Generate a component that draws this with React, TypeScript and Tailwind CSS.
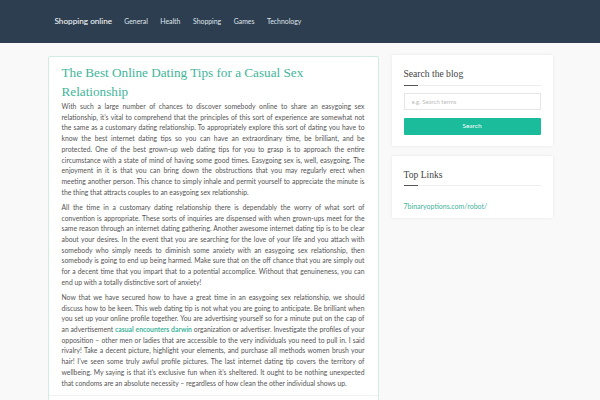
const navLinks = ["General", "Health", "Shopping", "Games", "Technology"];

const Widget = ({
  title,
  children,
  pb = "pb-[11px]",
}: {
  title: string;
  children: React.ReactNode;
  pb?: string;
}) => (
  <div className={`bg-white px-[12px] pt-[12px] ${pb} shadow-[0_0_3px_rgba(0,0,0,0.08)]`}>
    <h3 className="text-[9.6px] leading-[14px] text-[#444] font-['Liberation_Serif',serif]">{title}</h3>
    <div className="mt-[3.5px] flex h-px">
      <div className="w-[14px] bg-[#555]" />
      <div className="flex-1 bg-[#eee]" />
    </div>
    {children}
  </div>
);

export default function App() {
  return (
    <div className="min-h-screen bg-[#f9f9f9] font-['Lato','Liberation_Sans',sans-serif]">
      <nav className="h-[43px] bg-[#2d3e50]">
        <div className="mx-auto flex h-full w-[505px] items-center px-[7px]">
          <span className="text-[8.2px] text-white">Shopping online</span>
          <ul className="ml-[12px] flex gap-[12.5px]">
            {navLinks.map((l) => (
              <li key={l} className="text-[6.9px] text-[#dfe4ea]">
                {l}
              </li>
            ))}
          </ul>
        </div>
      </nav>

      <div className="mx-auto mt-[13px] flex w-[505px] items-start gap-[13px]">
        {/* Main article */}
        <article className="w-[331px] rounded-[2px] border border-[#d3ebe5] bg-white px-[13px] pt-[6px]">
          <h1 className="text-[13.2px] leading-[19px] text-[#40b59b] font-['Liberation_Serif',serif]">
            The Best Online Dating Tips for a Casual Sex
            <br />
            Relationship
          </h1>
          <div className="space-y-[4.5px] text-justify text-[6.8px] leading-[10.7px] text-[#555]">
            <p>
              With such a large number of chances to discover somebody online to share an easygoing sex
              relationship, it’s vital to comprehend that the principles of this sort of experience are
              somewhat not the same as a customary dating relationship. To appropriately explore this sort
              of dating you have to know the best internet dating tips so you can have an extraordinary
              time, be brilliant, and be protected. One of the best grown-up web dating tips for you to
              grasp is to approach the entire circumstance with a state of mind of having some good times.
              Easygoing sex is, well, easygoing. The enjoyment in it is that you can bring down the
              obstructions that you may regularly erect when meeting another person. This chance to simply
              inhale and permit yourself to appreciate the minute is the thing that attracts couples to an
              easygoing sex relationship.
            </p>
            <p>
              All the time in a customary dating relationship there is dependably the worry of what sort of
              convention is appropriate. These sorts of inquiries are dispensed with when grown-ups meet for
              the same reason through an internet dating gathering. Another awesome internet dating tip is
              to be clear about your desires. In the event that you are searching for the love of your life
              and you attach with somebody who simply needs to diminish some anxiety with an easygoing sex
              relationship, then somebody is going to end up being harmed. Make sure that on the off chance
              that you are simply out for a decent time that you impart that to a potential accomplice.
              Without that genuineness, you can end up with a totally distinctive sort of anxiety!
            </p>
            <p>
              Now that we have secured how to have a great time in an easygoing sex relationship, we should
              discuss how to be keen. This web dating tip is not what you are going to anticipate. Be
              brilliant when you set up your online profile together. You are advertising yourself so for a
              minute put on the cap of an advertisement{" "}
              <a className="font-bold text-[#3fb39a]">casual encounters darwin</a> organization or
              advertiser. Investigate the profiles of your opposition – other men or ladies that are
              accessible to the very individuals you need to pull in. I said rivalry! Take a decent picture,
              highlight your elements, and purchase all methods women brush your hair! I’ve seen some truly
              awful profile pictures. The last internet dating tip covers the territory of wellbeing. My
              saying is that it’s exclusive fun when it’s sheltered. It ought to be nothing unexpected that
              condoms are an absolute necessity – regardless of how clean the other individual shows up.
            </p>
          </div>
          <div className="-mx-[13px] mt-[7px] h-[20px] border-t border-[#eef2f1]" />
        </article>

        {/* Sidebar */}
        <aside className="-mt-[1px] flex w-[161px] flex-col gap-[10px]">
          <Widget title="Search the blog">
            <input
              className="mt-[4px] h-[17px] w-full border border-[#e6e6e6] px-[7px] text-[6px] text-[#555] outline-none placeholder:text-[#bbb]"
              placeholder="e.g. Search terms"
            />
            <button className="mt-[8px] h-[17px] w-full rounded-[1px] bg-[#1abc9c] text-[6.5px] text-white">
              Search
            </button>
          </Widget>
          <Widget title="Top Links" pb="pb-[7px]">
            <a className="mt-[15px] block text-[7px] leading-[10px] text-[#3fb39a]">7binaryoptions.com/robot/</a>
          </Widget>
        </aside>
      </div>
    </div>
  );
}
